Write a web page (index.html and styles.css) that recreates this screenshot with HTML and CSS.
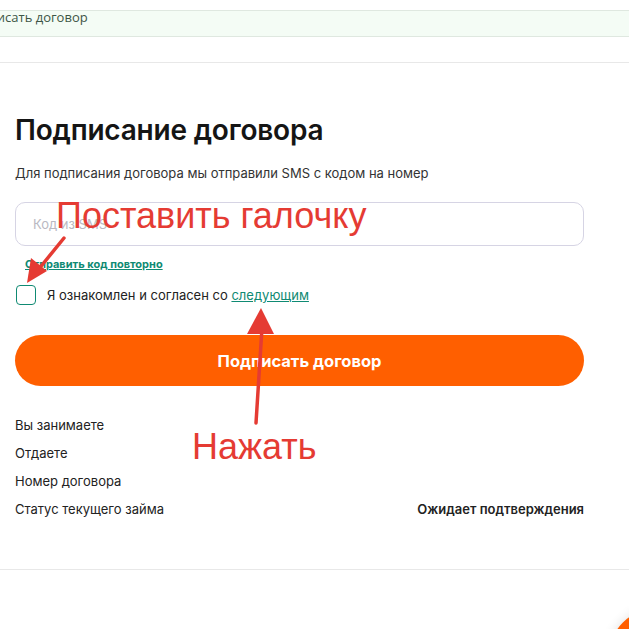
FILE: index.html
```html
<!DOCTYPE html>
<html lang="ru">
<head>
    <meta charset="UTF-8">
    <meta name="viewport" content="width=device-width, initial-scale=1.0">
    <title>Подписание договора</title>
    <link rel="stylesheet" href="styles.css">
</head>
<body>
    <div class="crumbs">
        <span class="crumbs-text">Подписать договор</span>
    </div>

    <div class="sign">
        <h1>Подписание договора</h1>
        <p class="hint">Для подписания договора мы отправили SMS с кодом на номер</p>

        <input type="text" class="code-input" placeholder="Код из SMS">
        <div class="resend-wrap"><a href="#" class="resend">Отправить код повторно</a></div>

        <label class="agree">
            <span class="box"></span>
            <span>Я ознакомлен и согласен со <a href="#">следующим</a></span>
        </label>

        <button class="sign-btn">Подписать договор</button>

        <div class="details">
            <div class="row"><span>Вы занимаете</span><span></span></div>
            <div class="row"><span>Отдаете</span><span></span></div>
            <div class="row"><span>Номер договора</span><span></span></div>
            <div class="row"><span>Статус текущего займа</span><b>Ожидает подтверждения</b></div>
        </div>
    </div>

    <div class="chat-btn"></div>

    <!-- пометки поверх скриншота -->
    <div class="note note-check">Поставить галочку</div>
    <div class="note note-press">Нажать</div>
    <svg class="arrows" width="629" height="629" viewBox="0 0 629 629">
        <line x1="64" y1="238" x2="38" y2="270" stroke="#e53b33" stroke-width="3.5" stroke-linecap="round"/>
        <polygon points="27,283 31,258 47,271" fill="#e53b33"/>
        <line x1="256" y1="423" x2="262" y2="328" stroke="#e53b33" stroke-width="3.5" stroke-linecap="round"/>
        <polygon points="261,308 247,334 274,334" fill="#e53b33"/>
    </svg>
</body>
</html>
```

FILE: styles.css
```css
body {
    margin: 0;
    font-family: "Inter", "Lato", sans-serif;
    color: #1c1c1c;
    background: #fff;
    overflow: hidden;
    height: 629px;
}
.crumbs {
    margin-top: 10px;
    height: 25px;
    background-color: #f4fcf5;
    border-top: 1px solid #dfe8e0;
    border-bottom: 1px solid #dfe8e0;
    overflow: hidden;
}
.crumbs-text {
    display: block;
    margin-left: -36px;
    font-family: "Open Sans", sans-serif;
    font-size: 13px;
    line-height: 10px;
    padding-top: 1px;
    color: #3d5646;
    white-space: nowrap;
}
.sign {
    margin-top: 25px;
    border-top: 1px solid #e8e8e8;
    border-bottom: 1px solid #e8e8e8;
    padding: 51px 45px 46px 15px;
    width: 569px;
}
h1 {
    margin: 0;
    font-size: 28px;
    font-weight: 600;
    line-height: 33px;
    letter-spacing: -0.2px;
    color: #151515;
}
.hint {
    margin: 18px 0 0 0;
    font-size: 13px;
    line-height: 16px;
    color: #333;
}
.code-input {
    display: block;
    box-sizing: border-box;
    width: 100%;
    height: 44px;
    margin-top: 21px;
    padding: 0 17px;
    border: 1px solid #d6d4e4;
    border-radius: 10px;
    font-family: inherit;
    font-size: 13px;
    outline: none;
}
.code-input::placeholder {
    color: #b9b9c2;
}
.resend-wrap {
    margin: 9px 0 0 10px;
    line-height: 14px;
}
.resend {
    font-size: 11px;
    font-weight: 700;
    color: #0f8a73;
}
.agree {
    display: flex;
    align-items: center;
    gap: 11px;
    height: 20px;
    margin-top: 14px;
    font-size: 13px;
    color: #222;
}
.agree a {
    color: #0f8a73;
}
.box {
    box-sizing: border-box;
    width: 20px;
    height: 20px;
    border: 1.5px solid #0f8a73;
    border-radius: 4px;
    margin-left: 1px;
}
.sign-btn {
    display: block;
    width: 100%;
    height: 51px;
    margin-top: 30px;
    border: none;
    border-radius: 26px;
    background-color: #ff5f00;
    color: #fff;
    font-family: inherit;
    font-size: 16.5px;
    font-weight: 700;
    cursor: pointer;
}
.details {
    margin-top: 25px;
}
.row {
    display: flex;
    justify-content: space-between;
    height: 28px;
    line-height: 28px;
    font-size: 13px;
    color: #222;
}
.row b {
    font-weight: 600;
}
.chat-btn {
    position: absolute;
    left: 608px;
    top: 608px;
    width: 100px;
    height: 100px;
    border-radius: 50%;
    background-color: #ff5f00;
    box-shadow: 0 0 12px rgba(0, 0, 0, 0.12);
}
.note {
    position: absolute;
    font-family: "Liberation Sans", Arial, sans-serif;
    font-size: 36px;
    color: #e53b33;
    white-space: nowrap;
}
.note-check {
    left: 56px;
    top: 195px;
}
.note-press {
    left: 192px;
    top: 426px;
}
.arrows {
    position: absolute;
    left: 0;
    top: 0;
}
```
